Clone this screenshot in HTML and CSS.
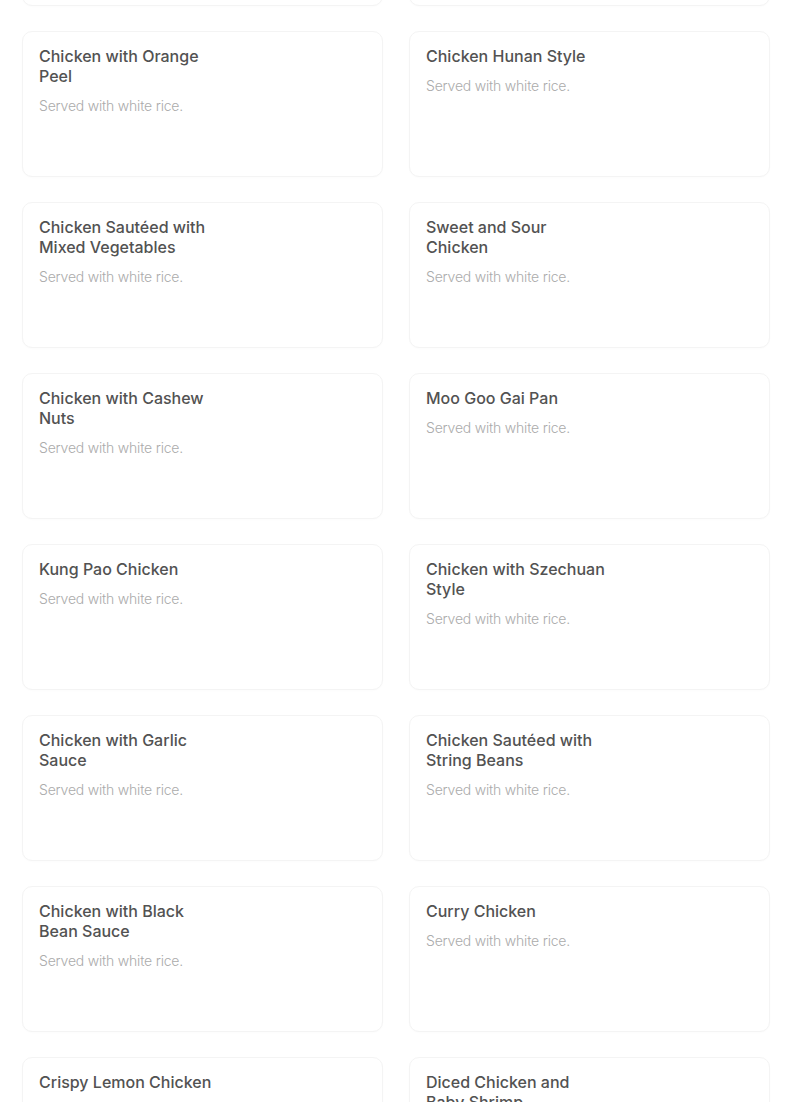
FILE: index.html
```html
<!DOCTYPE html>
<html lang="en">
<head>
<meta charset="utf-8">
<title>Chicken</title>
<link rel="stylesheet" href="styles.css">
</head>
<body>
<main class="menu">
  <div class="card"></div>
  <div class="card"></div>

  <div class="card"><h3 class="title">Chicken with Orange Peel</h3><p class="desc">Served with white rice.</p></div>
  <div class="card"><h3 class="title">Chicken Hunan Style</h3><p class="desc">Served with white rice.</p></div>

  <div class="card"><h3 class="title">Chicken Sautéed with Mixed Vegetables</h3><p class="desc">Served with white rice.</p></div>
  <div class="card"><h3 class="title">Sweet and Sour Chicken</h3><p class="desc">Served with white rice.</p></div>

  <div class="card"><h3 class="title">Chicken with Cashew Nuts</h3><p class="desc">Served with white rice.</p></div>
  <div class="card"><h3 class="title">Moo Goo Gai Pan</h3><p class="desc">Served with white rice.</p></div>

  <div class="card"><h3 class="title">Kung Pao Chicken</h3><p class="desc">Served with white rice.</p></div>
  <div class="card"><h3 class="title">Chicken with Szechuan Style</h3><p class="desc">Served with white rice.</p></div>

  <div class="card"><h3 class="title">Chicken with Garlic Sauce</h3><p class="desc">Served with white rice.</p></div>
  <div class="card"><h3 class="title">Chicken Sautéed with String Beans</h3><p class="desc">Served with white rice.</p></div>

  <div class="card"><h3 class="title">Chicken with Black Bean Sauce</h3><p class="desc">Served with white rice.</p></div>
  <div class="card"><h3 class="title">Curry Chicken</h3><p class="desc">Served with white rice.</p></div>

  <div class="card"><h3 class="title">Crispy Lemon Chicken</h3><p class="desc">Served with white rice.</p></div>
  <div class="card"><h3 class="title">Diced Chicken and Baby Shrimp</h3><p class="desc">Served with white rice.</p></div>
</main>
</body>
</html>
```
FILE: styles.css
```css
html, body {
  margin: 0;
  padding: 0;
  background: #ffffff;
}
body {
  font-family: Inter, "Noto Sans", "Liberation Sans", sans-serif;
  overflow: hidden;
  height: 1102px;
}
.menu {
  display: grid;
  grid-template-columns: 361px 361px;
  column-gap: 26px;
  row-gap: 25px;
  padding-left: 22px;
  margin-top: -140px;
}
.card {
  box-sizing: border-box;
  height: 146px;
  border: 1px solid #f4f4f4;
  border-radius: 10px;
  padding: 14px 16px 16px 15px;
  background: #fff;
  box-shadow: 0 1px 2px rgba(0,0,0,0.015);
}
.title {
  margin: 0;
  max-width: 181px;
  font-size: 16px;
  line-height: 20px;
  font-weight: 500;
  color: #525252;
  padding-left: 1px;
}
.desc {
  margin: 11px 0 0;
  padding-left: 1px;
  font-size: 14px;
  line-height: 18px;
  font-weight: 300;
  letter-spacing: -0.2px;
  color: #ababab;
}
```
